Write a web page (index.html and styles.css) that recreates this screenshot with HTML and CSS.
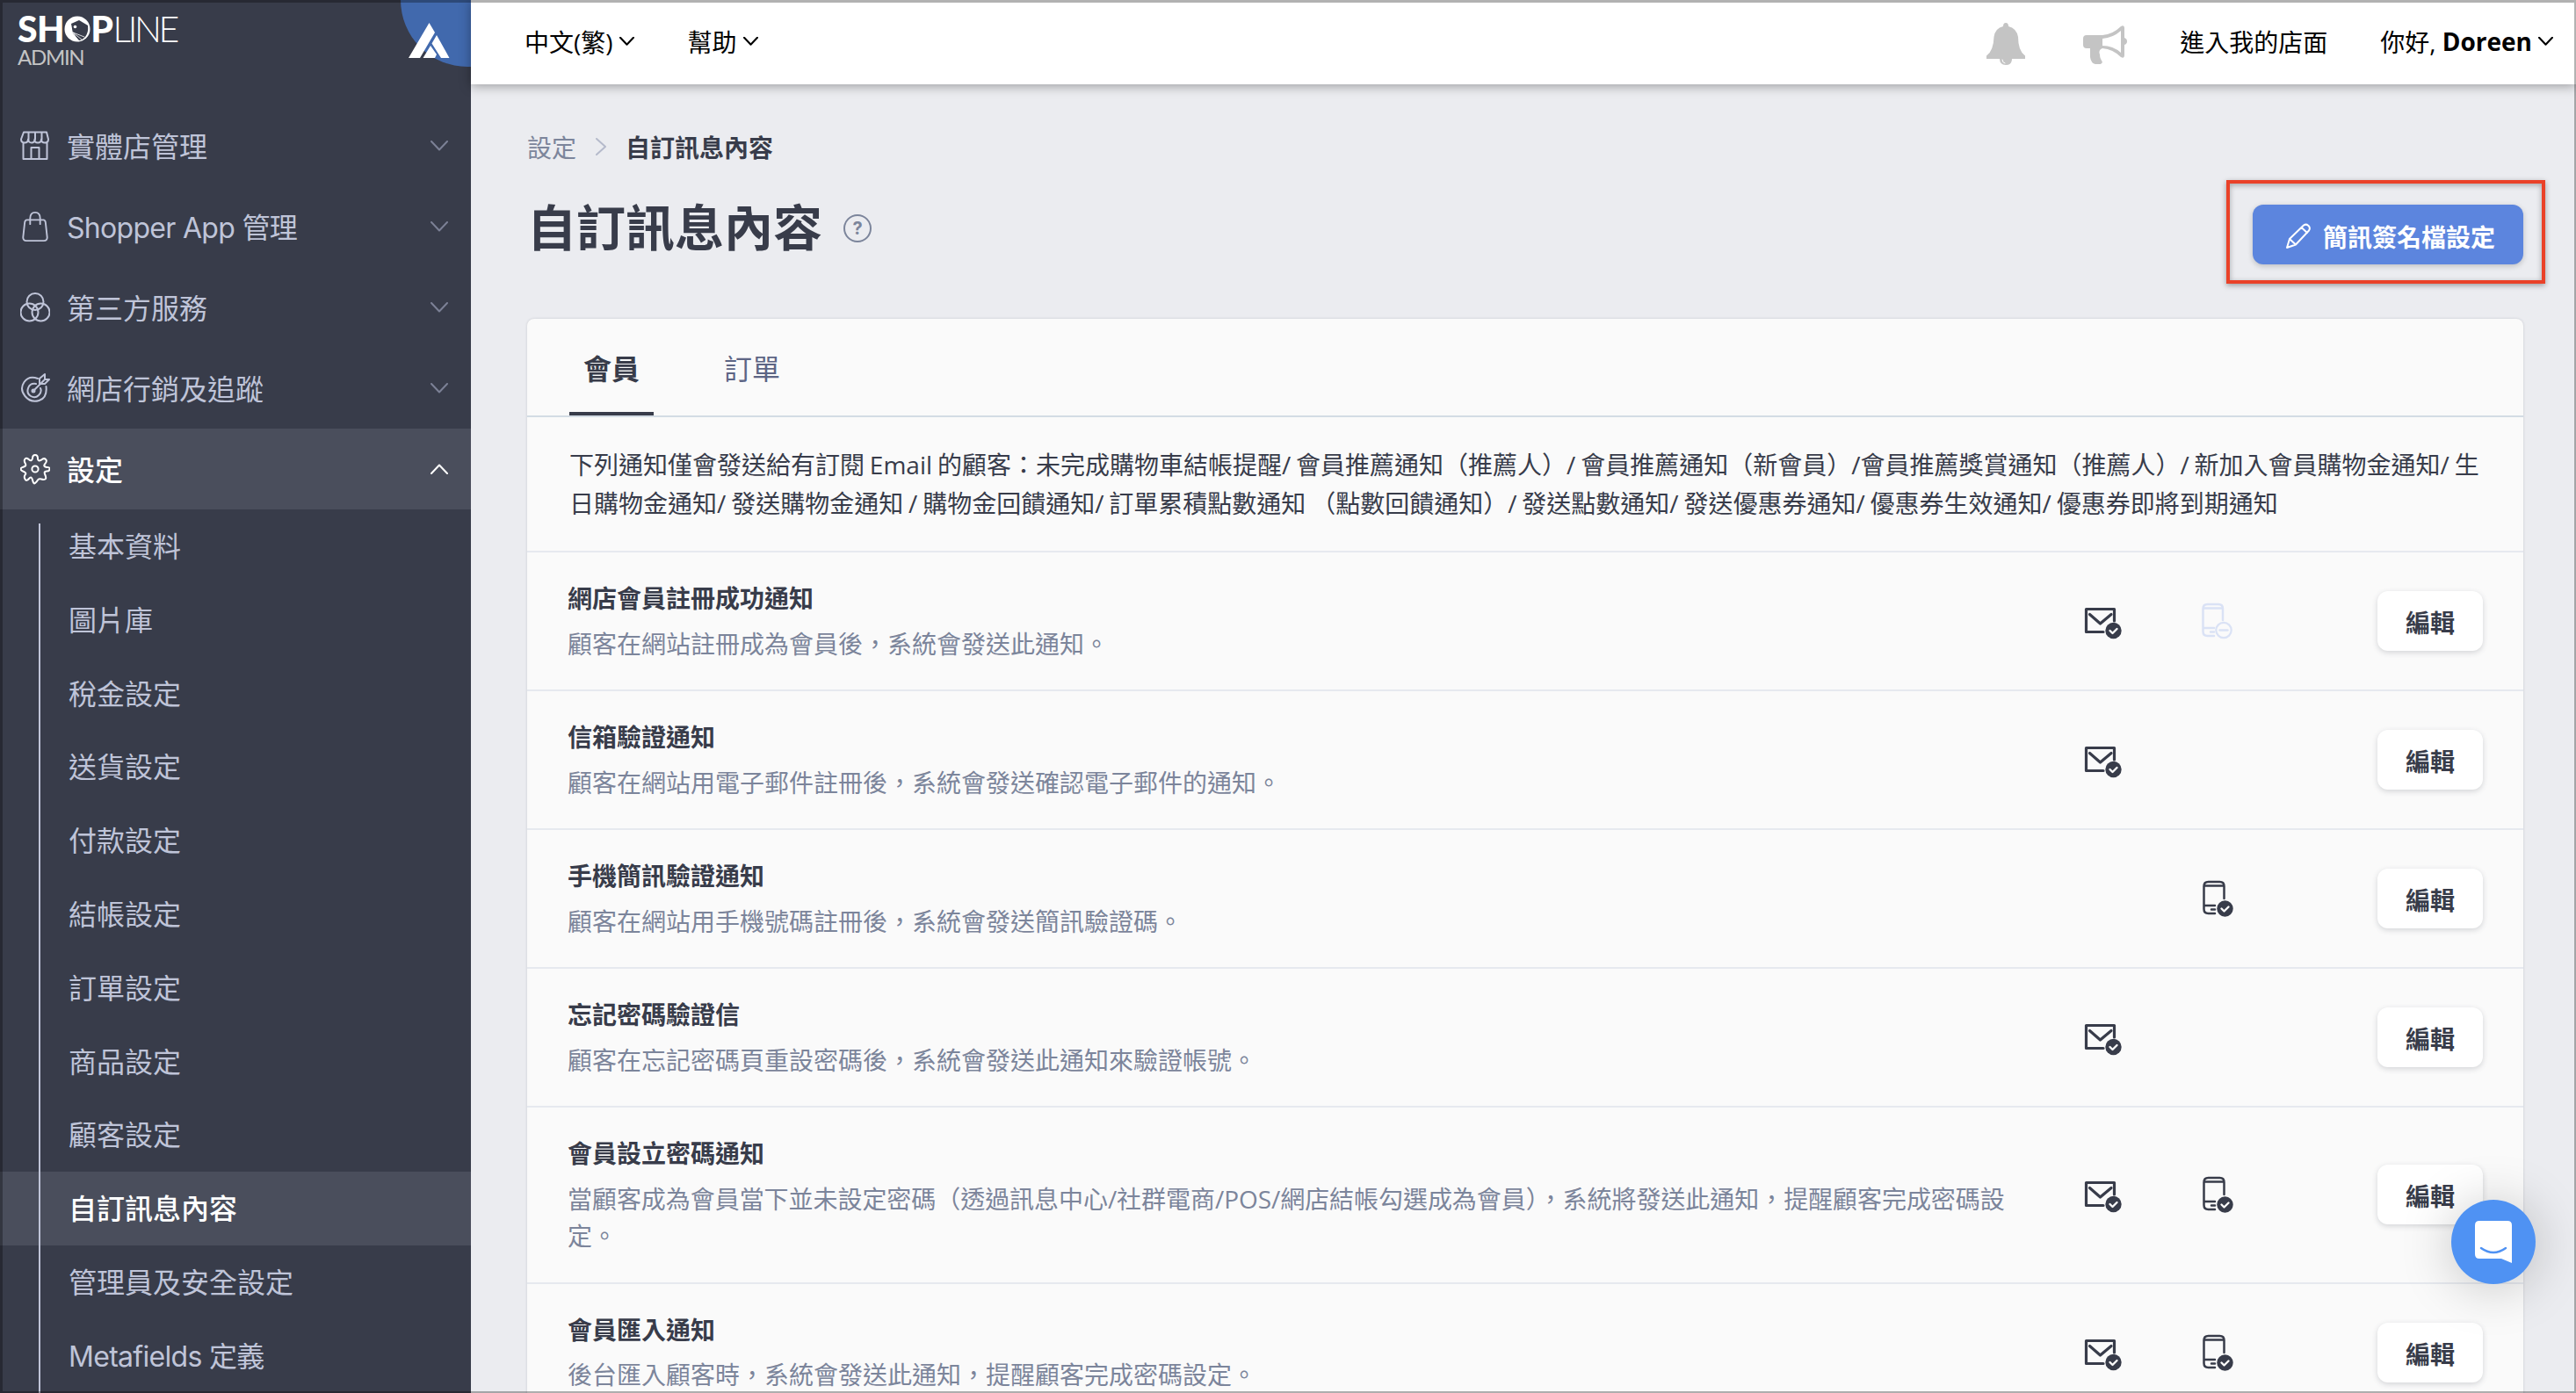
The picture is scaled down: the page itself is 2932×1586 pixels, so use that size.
FILE: index.html
```
<!DOCTYPE html>
<html lang="zh-Hant">
<head>
    <meta charset="UTF-8">
    <title>自訂訊息內容</title>
    <link rel="stylesheet" href="styles.css">
</head>
<body>

<!-- Shared icons -->
<svg class="sprite">
    <symbol id="down" viewBox="0 0 20 12"><path d="M1 1l9 9.500 9-9.500"/></symbol>
    <symbol id="mail" viewBox="0 0 44 38">
        <path d="M34.500 17V3.500H2.500v26H22" stroke-width="3.200"/>
        <path d="M6.500 9.500L18.500 20 31 9.500" stroke-width="3.200"/>
        <circle cx="33.500" cy="28" r="9.200" fill="currentColor" stroke="none"/>
        <path d="M29.500 28l3 3 5-5" stroke="#fafafa" stroke-width="2.400"/>
    </symbol>
    <symbol id="phone" viewBox="0 0 36 42">
        <path d="M24.500 21V7q0-5-5-5H6.500q-5 0-5 5v26q0 5 5 5H14M2 6.500h22M2 29h12M10 33.500h4" stroke-width="2.500"/>
        <circle cx="25.500" cy="32.500" r="9.200" fill="currentColor" stroke="none"/>
        <path d="M21.500 32.500l3 3 5-5" stroke="#fafafa" stroke-width="2.400"/>
    </symbol>
    <symbol id="phone-off" viewBox="0 0 36 42">
        <path d="M24 20V7q0-5-5-5H6.500q-5 0-5 5v26q0 5 5 5h7.500M2 6.500h21M2 29h12M10 33.500h4" stroke-width="2.500"/>
        <circle cx="25" cy="31.500" r="8.700" stroke-width="2.200"/>
        <path d="M20.500 31.500h9" stroke-width="2.400"/>
    </symbol>
</svg>

<div class="sidebar">
    <div class="brand">
        <div class="logo">
            <div class="logo-name"><b>SH</b><svg class="logo-o" viewBox="0 0 30 32"><circle cx="15" cy="16" r="14.500" fill="#fff"/><path d="M8 10l9-4 10 6q1 8-3 13-4 4-7 4L10 21z" fill="#383c4a"/><circle cx="12.500" cy="13.500" r="1.800" fill="#fff"/><path d="M10 20l10 8M10 20l6 10M10 20l13 5" stroke="#fff" stroke-width=".8"/></svg><b>P</b><span>LINE</span></div>
            <div class="logo-sub">ADMIN</div>
        </div>
        <svg class="brand-mark" viewBox="0 0 80 80">
            <circle cx="76" cy="0" r="76" fill="#4169ad"/>
            <path d="M32.500 26L9 66h13l17-29zM41 40l-5.500 9.500L46 66h9.500zM34 52l-8.500 14h13.500l2-4z" fill="#fff"/>
        </svg>
    </div>

    <div class="nav">
        <div class="nav-item">
            <svg class="nav-icon" viewBox="0 0 34 34"><path d="M4 1.500h26l2 8q0 4-4 4t-4-4q0 4-4 4t-3.500-4q0 4-3.500 4t-4-4q0 4-4 4t-4-4zM9.500 2v8M17 2v8M24.500 2v8M3.500 13.500v18.500h27V13.500M12.500 32V19h9v13"/></svg>
            <span>實體店管理</span><svg class="arrow"><use href="#down"/></svg>
        </div>
        <div class="nav-item">
            <svg class="nav-icon" viewBox="0 0 34 38"><path d="M7 11h20q2 0 2.500 3l2 18q0 4-4 4h-21q-4 0-4-4l2-18q.5-3 2.500-3zM11 16V9q0-7 6-7t6 7v7"/></svg>
            <span class="latin">Shopper App 管理</span><svg class="arrow"><use href="#down"/></svg>
        </div>
        <div class="nav-item">
            <svg class="nav-icon" viewBox="0 0 34 34"><circle cx="17" cy="10.500" r="9.500"/><circle cx="10.500" cy="22.500" r="10"/><circle cx="23.500" cy="22.500" r="10"/></svg>
            <span>第三方服務</span><svg class="arrow"><use href="#down"/></svg>
        </div>
        <div class="nav-item">
            <svg class="nav-icon" viewBox="0 0 34 34"><path d="M20 6Q10 2 4.500 10t1 16 16 5 8-16M18 12q-7-1-9 5t3 9 9-1 2-8M15 20L27 8M22 6v6h6l5-5h-5V1z"/><circle cx="15" cy="20" r="1.500"/></svg>
            <span>網店行銷及追蹤</span><svg class="arrow"><use href="#down"/></svg>
        </div>
        <div class="nav-item open">
            <svg class="nav-icon" viewBox="0 0 34 34"><path d="M14 5q0-4 3-4t3 4 4 1.700q3-2.700 5-.7t-.7 5T30 15q3.500-.5 3.500 2t-3.500 2.500-1.700 4 .2 5-4.500 0-4 1-3 3.500-3-3.500-4-1.500-4.500.5.200-5-1.700-3.500T.5 17 4 14.500t1.700-4-.2-5 4.500.7T14 5z"/><circle cx="17" cy="17" r="3.600"/></svg>
            <span>設定</span><svg class="arrow up"><use href="#down"/></svg>
        </div>
        <div class="subnav">
            <div class="sub-item">基本資料</div>
            <div class="sub-item">圖片庫</div>
            <div class="sub-item">稅金設定</div>
            <div class="sub-item">送貨設定</div>
            <div class="sub-item">付款設定</div>
            <div class="sub-item">結帳設定</div>
            <div class="sub-item">訂單設定</div>
            <div class="sub-item">商品設定</div>
            <div class="sub-item">顧客設定</div>
            <div class="sub-item active">自訂訊息內容</div>
            <div class="sub-item">管理員及安全設定</div>
            <div class="sub-item latin">Metafields 定義</div>
        </div>
    </div>
</div>

<div class="main">
    <div class="topbar">
        <div class="top-link">中文(繁)<svg class="caret"><use href="#down"/></svg></div>
        <div class="top-link">幫助<svg class="caret"><use href="#down"/></svg></div>
        <div class="top-right">
            <svg class="bell" viewBox="0 0 44 48"><path d="M19 4q0-4 3-4t3 4q9 2 11 12 0 16 8 21.500V41H0v-3.500Q8 32 8.500 16 10 6 19 4zM15 41h14q0 7-7 7t-7-7z" fill="#c4c4c4"/><path d="M18 42q0 3.500 3 4" fill="none" stroke="#fff"/></svg>
            <svg class="horn" viewBox="0 0 50 44"><path d="M4 11h18Q34 10 43 1q4-2 4 2v11q3 1 3 4t-3 4v12q0 4-4 2-9-9-21-10-5 2-3 7 0 3 1 5l2 4-2 2h-6q-5-1-6-8V26H4q-4 0-4-4v-7q0-4 4-4zm18 4v8q12 0 21 8V6q-9 8-21 9z" fill="#c4c4c4" fill-rule="evenodd"/></svg>
            <div class="store-link">進入我的店面</div>
            <div class="top-link user">你好,&nbsp;<b>Doreen</b><svg class="caret"><use href="#down"/></svg></div>
        </div>
    </div>

    <div class="content">
        <div class="page-head">
            <div>
                <div class="breadcrumb"><span>設定</span><svg class="crumb-arrow" viewBox="0 0 12 20"><path d="M1 1l10 9-10 9"/></svg><b>自訂訊息內容</b></div>
                <h1>自訂訊息內容<span class="help">?</span></h1>
            </div>
            <div class="highlight">
                <button class="sign-btn"><svg class="pencil" viewBox="0 0 30 30"><path d="M2 28l3-10L21 2.500q3-2 5.500.5t.5 5.500L12 24.500zM5 18l7 6.500M18.500 5l6.500 6"/></svg>簡訊簽名檔設定</button>
            </div>
        </div>

        <div class="card">
            <div class="tabs">
                <div class="tab active">會員</div>
                <div class="tab">訂單</div>
            </div>
            <div class="info">下列通知僅會發送給有訂閱 Email 的顧客：未完成購物車結帳提醒/ 會員推薦通知（推薦人）/ 會員推薦通知（新會員）/會員推薦獎賞通知（推薦人）/ 新加入會員購物金通知/ 生<br>日購物金通知/ 發送購物金通知 / 購物金回饋通知/ 訂單累積點數通知 （點數回饋通知）/ 發送點數通知/ 發送優惠券通知/ 優惠券生效通知/ 優惠券即將到期通知</div>

            <div class="row">
                <div class="text"><h3>網店會員註冊成功通知</h3><p>顧客在網站註冊成為會員後，系統會發送此通知。</p></div>
                <div class="status"><svg class="mail"><use href="#mail"/></svg></div>
                <div class="status"><svg class="phone off"><use href="#phone-off"/></svg></div>
                <button class="edit-btn">編輯</button>
            </div>
            <div class="row">
                <div class="text"><h3>信箱驗證通知</h3><p>顧客在網站用電子郵件註冊後，系統會發送確認電子郵件的通知。</p></div>
                <div class="status"><svg class="mail"><use href="#mail"/></svg></div>
                <div class="status"></div>
                <button class="edit-btn">編輯</button>
            </div>
            <div class="row">
                <div class="text"><h3>手機簡訊驗證通知</h3><p>顧客在網站用手機號碼註冊後，系統會發送簡訊驗證碼。</p></div>
                <div class="status"></div>
                <div class="status"><svg class="phone"><use href="#phone"/></svg></div>
                <button class="edit-btn">編輯</button>
            </div>
            <div class="row">
                <div class="text"><h3>忘記密碼驗證信</h3><p>顧客在忘記密碼頁重設密碼後，系統會發送此通知來驗證帳號。</p></div>
                <div class="status"><svg class="mail"><use href="#mail"/></svg></div>
                <div class="status"></div>
                <button class="edit-btn">編輯</button>
            </div>
            <div class="row">
                <div class="text"><h3>會員設立密碼通知</h3><p class="long">當顧客成為會員當下並未設定密碼（透過訊息中心/社群電商/POS/網店結帳勾選成為會員），系統將發送此通知，提醒顧客完成密碼設<br>定。</p></div>
                <div class="status"><svg class="mail"><use href="#mail"/></svg></div>
                <div class="status"><svg class="phone"><use href="#phone"/></svg></div>
                <button class="edit-btn">編輯</button>
            </div>
            <div class="row">
                <div class="text"><h3>會員匯入通知</h3><p>後台匯入顧客時，系統會發送此通知，提醒顧客完成密碼設定。</p></div>
                <div class="status"><svg class="mail"><use href="#mail"/></svg></div>
                <div class="status"><svg class="phone"><use href="#phone"/></svg></div>
                <button class="edit-btn">編輯</button>
            </div>
        </div>
    </div>
</div>

<div class="chat">
    <svg viewBox="0 0 42 48"><path d="M5 0h32q5 0 5 5v43l-12-5H5q-5 0-5-5V5q0-5 5-5z" fill="#fff"/><path d="M7 31q14 10 28 0" fill="none" stroke="#4f92f3" stroke-width="2.500" stroke-linecap="round"/></svg>
</div>
<div class="frame"></div>

</body>
</html>
```
FILE: styles.css
```
* {
    box-sizing: border-box;
}
body {
    margin: 0;
    display: flex;
    height: 1586px;
    overflow: hidden;
    background-color: #ebecf0;
    font-family: "Open Sans", "Noto Sans CJK TC", sans-serif;
    font-size: 28px;
    color: #383c4a;
}
svg {
    display: block;
    flex: none;
    fill: none;
    stroke: currentColor;
    stroke-linecap: round;
    stroke-linejoin: round;
}
h1, h3, p {
    margin: 0;
}
button {
    border: none;
    font: inherit;
    font-weight: bold;
    cursor: pointer;
}
.sprite {
    position: absolute;
    width: 0;
    height: 0;
}

/* Sidebar */
.sidebar {
    width: 536px;
    height: 1586px;
    flex: none;
    overflow: hidden;
    background-color: #383c4a;
    color: #bfc4d8;
    font-family: Inter, "Noto Sans CJK TC", sans-serif;
    font-size: 32px;
}
.brand {
    display: flex;
    justify-content: space-between;
    height: 120px;
    padding-left: 20px;
}
.logo {
    padding-top: 12px;
    font-family: Lato, sans-serif;
}
.logo-name {
    display: flex;
    align-items: center;
    height: 41px;
    font-size: 41px;
    line-height: 41px;
    color: #fff;
}
.logo-name b {
    font-weight: 900;
    letter-spacing: -.5px;
}
.logo-name span {
    font-weight: 300;
    letter-spacing: -3.500px;
}
.logo-o {
    width: 30px;
    height: 32px;
    stroke: none;
}
.logo-sub {
    font-size: 24px;
    line-height: 24px;
    letter-spacing: -1.300px;
    color: #c4c4c4;
}
.brand-mark {
    width: 80px;
    height: 80px;
    stroke: none;
}
.nav-item {
    display: flex;
    align-items: center;
    height: 92px;
    padding: 0 26px 0 23px;
}
.nav-item span {
    flex: 1;
    padding: 0 0 3px 19px;
}
.nav-item.open {
    background-color: #4a4e5c;
    color: #fff;
    font-weight: 500;
}
.nav-icon {
    width: 34px;
    height: 36px;
    stroke-width: 2;
}
.arrow {
    width: 20px;
    height: 12px;
    stroke-width: 2;
    color: #7c8196;
}
.arrow.up {
    color: #fff;
    transform: rotate(180deg);
}
.subnav {
    background: linear-gradient(#bfc4d8, #bfc4d8) 44px 16px / 2px 100% no-repeat;
}
.sub-item {
    height: 83.800px;
    padding-left: 78px;
    line-height: 86px;
}
.sub-item.active {
    background: linear-gradient(#bfc4d8, #bfc4d8) 44px 0 / 2px 100% no-repeat #4a4e5c;
    color: #fff;
    font-weight: 500;
}
.latin {
    letter-spacing: -.7px;
}

/* Top bar */
.main {
    flex: 1;
    min-width: 0;
}
.topbar {
    position: relative;
    display: flex;
    align-items: center;
    height: 96px;
    padding: 0 26px 2px 61px;
    background-color: #fff;
    color: #000;
    box-shadow: 0 2px 12px rgba(0, 0, 0, .35);
}
.top-link {
    display: flex;
    align-items: center;
    margin-right: 61px;
}
.caret {
    width: 17px;
    height: 10px;
    margin-left: 7px;
    stroke-width: 2.500;
}
.top-right {
    display: flex;
    align-items: center;
    margin-left: auto;
}
.bell {
    width: 44px;
    height: 48px;
    margin: 6px 66px 0 0;
    stroke: none;
}
.horn {
    width: 50px;
    height: 44px;
    margin: 7px 60px 0 0;
    stroke: none;
}
.store-link {
    margin-right: 60px;
}
.user {
    margin-right: 0;
}

/* Page heading */
.content {
    padding: 0 60px 0 64px;
}
.page-head {
    display: flex;
    justify-content: space-between;
    height: 267px;
}
.breadcrumb {
    display: flex;
    align-items: center;
    height: 40px;
    margin-top: 51px;
    color: #7c859b;
}
.breadcrumb b {
    color: #383c4a;
}
.crumb-arrow {
    width: 12px;
    height: 20px;
    margin: 0 22px;
    stroke-width: 2;
    color: #b5bacb;
}
h1 {
    display: flex;
    align-items: center;
    height: 80px;
    margin-top: 31px;
    font-size: 56px;
    line-height: 80px;
}
.help {
    width: 32px;
    height: 32px;
    margin: 4px 0 0 24px;
    border: 2px solid #7c859b;
    border-radius: 50%;
    font: bold 20px/28px Inter, sans-serif;
    text-align: center;
    color: #7c859b;
}
.highlight {
    width: 363px;
    height: 118px;
    margin: 109px -25px 0 0;
    padding: 24px 21px 0 26px;
    border: 4px solid #ea4128;
    box-shadow: 0 2px 6px rgba(0, 0, 0, .35), inset 0 2px 6px rgba(0, 0, 0, .3);
}
.sign-btn {
    display: flex;
    align-items: center;
    width: 308px;
    height: 68px;
    padding: 4px 0 0 37px;
    border-radius: 12px;
    background-color: #5c85de;
    color: #fff;
    box-shadow: 0 2px 6px rgba(0, 0, 0, .2);
}
.pencil {
    width: 30px;
    height: 30px;
    margin-right: 13px;
    stroke-width: 2;
}

/* Notification list */
.card {
    border-radius: 8px 8px 0 0;
    background-color: #fafafa;
    box-shadow: 0 0 3px rgba(56, 60, 74, .2);
}
.tabs {
    display: flex;
    gap: 64px;
    height: 112px;
    padding-left: 48px;
    border-bottom: 2px solid #d3dce4;
}
.tab {
    padding: 0 16px;
    font-size: 32px;
    line-height: 113px;
    color: #5d6585;
}
.tab.active {
    border-bottom: 4px solid #383c4a;
    font-weight: bold;
    color: #383c4a;
}
.info {
    height: 154px;
    padding: 32px 0 0 48px;
    border-bottom: 2px solid #e6e9ef;
    line-height: 44px;
    word-spacing: -1.400px;
    white-space: nowrap;
}
.row {
    display: flex;
    align-items: center;
    padding: 31px 46px 31px 46px;
    border-bottom: 2px solid #e6e9ef;
}
.text {
    width: 1703px;
    white-space: nowrap;
}
.text h3 {
    margin-bottom: 9px;
    font-size: 28px;
    line-height: 42.500px;
}
.text p {
    line-height: 42.500px;
    color: #7c859b;
}
.text .long {
    letter-spacing: -.05px;
}
.status {
    width: 88px;
    margin-right: 46px;
    padding-left: 23px;
}
.mail {
    width: 44px;
    height: 38px;
    margin-top: 4px;
}
.phone {
    width: 36px;
    height: 42px;
    margin-left: 1px;
}
.phone.off {
    margin-left: 0;
    color: #dae2f5;
}
.edit-btn {
    width: 120px;
    height: 68px;
    margin-left: auto;
    padding: 2px 0 0;
    border-radius: 12px;
    background-color: #fff;
    color: #383c4a;
    box-shadow: 0 2px 6px rgba(56, 60, 74, .2);
}

/* Chat launcher */
.chat {
    position: fixed;
    left: 2790px;
    top: 1366px;
    display: flex;
    justify-content: center;
    width: 96px;
    height: 96px;
    padding-top: 24px;
    border-radius: 50%;
    background-color: #4f92f3;
    box-shadow: 0 4px 60px rgba(0, 0, 0, .22);
}
.chat svg {
    width: 42px;
    height: 48px;
    stroke: none;
}
.frame {
    position: fixed;
    inset: 0;
    border: 3px solid rgba(0, 0, 0, .3);
    border-width: 3px 2px 2px 3px;
    pointer-events: none;
}
```
